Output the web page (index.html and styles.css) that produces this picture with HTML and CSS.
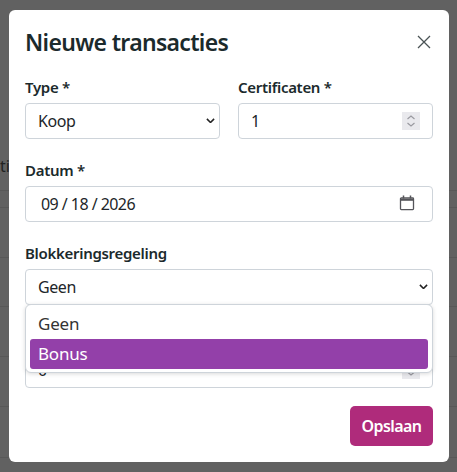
FILE: index.html
```html
<!DOCTYPE html>
<html lang="nl">
<head>
<meta charset="utf-8">
<title>Nieuwe transacties</title>
<link rel="stylesheet" href="styles.css">
</head>
<body>
<div class="page-behind">
  <span class="behind-text">ti</span>
  <div class="behind-line l1"></div>
  <div class="behind-line l2"></div>
  <div class="behind-line l3"></div>
  <div class="behind-line l4"></div>
  <div class="behind-line l5"></div>
  <div class="behind-line l6"></div>
  <div class="behind-line l7"></div>
</div>
<div class="modal">
  <header class="modal-header">
    <h1 class="modal-title">Nieuwe transacties</h1>
    <button class="close" type="button" aria-label="Sluiten">
      <svg viewBox="0 0 16 16" width="16" height="16"><path d="M2 2l12 12M14 2L2 14" stroke="#4a5355" stroke-width="1.300" fill="none"/></svg>
    </button>
  </header>
  <form class="modal-body">
    <div class="row">
      <div class="group">
        <label class="label">Type *</label>
        <div class="field">
          <div class="control">Koop</div>
          <svg class="chevron" viewBox="0 0 10 6" width="9" height="5.400"><path d="M1 1l4 4 4-4" stroke="#222" stroke-width="1.700" fill="none"/></svg>
        </div>
      </div>
      <div class="group">
        <label class="label">Certificaten *</label>
        <div class="field">
          <div class="control">1</div>
          <svg class="spinner" viewBox="0 0 18 18" width="18" height="18"><rect width="18" height="18" fill="#e9e9ed"/><path d="M5.500 7l3.500-3 3.500 3M5.500 11l3.500 3 3.500-3" stroke="#9a9aa0" stroke-width="1.200" fill="none"/></svg>
        </div>
      </div>
    </div>
    <div class="group">
      <label class="label">Datum *</label>
      <div class="field">
        <div class="control date">09 / 18 / 2026</div>
        <svg class="calendar" viewBox="0 0 16 16" width="16" height="16"><path d="M2.300 3h11.400a.8.8 0 0 1 .8.800v10a.8.8 0 0 1-.8.800H2.300a.8.8 0 0 1-.8-.8v-10a.8.8 0 0 1 .8-.8z" stroke="#55555a" stroke-width="1.300" fill="none"/><path d="M1.500 4.800h13" stroke="#55555a" stroke-width="2" fill="none"/><path d="M4.500 .5v3M11.500 .5v3" stroke="#55555a" stroke-width="1.500" fill="none"/></svg>
      </div>
    </div>
    <div class="group">
      <label class="label">Blokkeringsregeling</label>
      <div class="field">
        <div class="control">Geen</div>
        <svg class="chevron" viewBox="0 0 10 6" width="9" height="5.400"><path d="M1 1l4 4 4-4" stroke="#222" stroke-width="1.700" fill="none"/></svg>
      </div>
      <div class="dropdown">
        <div class="option">Geen</div>
        <div class="option active">Bonus</div>
      </div>
    </div>
    <div class="group">
      <div class="label"></div>
      <div class="field">
        <div class="control">0</div>
        <svg class="spinner" viewBox="0 0 18 18" width="18" height="18"><rect width="18" height="18" fill="#e9e9ed"/><path d="M5.500 11l3.500 3 3.500-3" stroke="#9a9aa0" stroke-width="1.200" fill="none"/></svg>
      </div>
    </div>
    <div class="actions">
      <button class="save" type="button">Opslaan</button>
    </div>
  </form>
</div>
</body>
</html>
```
FILE: styles.css
```css
* { box-sizing: border-box; }
html, body { margin: 0; height: 100%; }
body {
  position: relative;
  width: 457px;
  height: 472px;
  overflow: hidden;
  background: #616161;
  font-family: "Noto Sans", sans-serif;
  color: #1b2a2c;
  padding: 10px 8px 10px 9px;
}
.page-behind { position: absolute; inset: 0; }
.behind-text { position: absolute; left: 0; top: 155px; font-size: 16px; color: #222; }
.behind-line { position: absolute; left: 0; right: 0; height: 1px; background: #585858; }
.l1 { top: 190px; } .l2 { top: 207px; } .l3 { top: 257px; } .l4 { top: 306px; }
.l5 { top: 356px; } .l6 { top: 406px; } .l7 { top: 457px; }
.modal {
  position: relative;
  width: 440px;
  height: 452px;
  background: #fff;
  border-radius: 6px;
  padding: 16px;
}
.modal-header { display: flex; justify-content: space-between; align-items: center; height: 32px; margin-bottom: 20px; }
.modal-title { margin: 0; font-size: 23px; font-weight: 600; line-height: 32px; letter-spacing: -0.68px; }
.close { border: 0; background: none; padding: 0; margin-right: 1px; display: flex; }
.modal-body { display: flex; flex-direction: column; gap: 22px; }
.row { display: grid; grid-template-columns: 195px 195px; gap: 18px; }
.group { display: flex; flex-direction: column; gap: 7px; position: relative; }
.label { font-size: 15px; line-height: 18px; font-weight: 600; min-height: 18px; letter-spacing: -0.3px; }
.field { position: relative; }
.control {
  height: 36px;
  border: 1px solid #ced4da;
  border-radius: 4px;
  background: #fff;
  padding: 0 12px;
  font-size: 16px;
  line-height: 34px;
  color: #212529;
  letter-spacing: -0.4px;
}
.date { padding-left: 15px; letter-spacing: -0.55px; }
.chevron { position: absolute; right: 5px; top: 15px; }
.spinner { position: absolute; right: 13px; top: 9px; }
.calendar { position: absolute; right: 18px; top: 9px; }
.dropdown {
  position: absolute;
  z-index: 2;
  left: 0;
  right: 0;
  top: 60px;
  height: 69px;
  background: #fff;
  border: 1px solid #ced4da;
  border-radius: 6px;
  box-shadow: 0 1px 4px rgba(0,0,0,.15);
  padding: 4px;
  font-size: 17px;
  letter-spacing: -0.2px;
}
.option { height: 30px; line-height: 30px; padding-left: 8px; color: #333; border-radius: 3px; }
.active { background: #9340a9; color: #fff; }
.actions { display: flex; justify-content: flex-end; margin-top: -4px; }
.save {
  height: 40px;
  width: 83px;
  padding: 0;
  border: 0;
  border-radius: 5px;
  background: #af2b7b;
  color: #fff;
  font: 600 16px "Noto Sans", sans-serif;
  letter-spacing: -0.6px;
}
```
